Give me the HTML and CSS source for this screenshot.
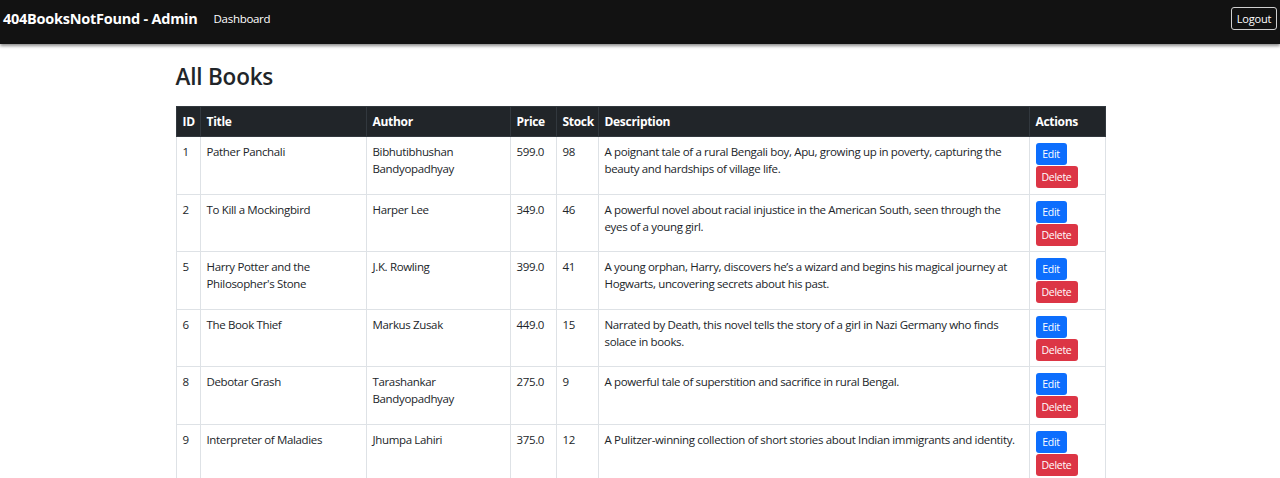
FILE: index.html
```html
<!DOCTYPE html>
<html lang="en">
<head>
<meta charset="utf-8">
<title>Admin - All Books</title>
<link rel="stylesheet" href="styles.css">
</head>
<body>
<nav class="navbar">
  <div class="nav-left">
    <span class="brand">404BooksNotFound - Admin</span>
    <a class="nav-link" href="#">Dashboard</a>
  </div>
  <button class="btn-logout">Logout</button>
</nav>
<main class="container">
  <h2 class="title">All Books</h2>
  <table class="books">
    <colgroup>
      <col class="c-id"><col class="c-title"><col class="c-author"><col class="c-price"><col class="c-stock"><col class="c-desc"><col class="c-act">
    </colgroup>
    <thead>
      <tr><th>ID</th><th>Title</th><th>Author</th><th>Price</th><th>Stock</th><th>Description</th><th>Actions</th></tr>
    </thead>
    <tbody>
      <tr><td>1</td><td>Pather Panchali</td><td>Bibhutibhushan Bandyopadhyay</td><td>599.0</td><td>98</td><td>A poignant tale of a rural Bengali boy, Apu, growing up in poverty, capturing the beauty and hardships of village life.</td><td><button class="btn edit">Edit</button><button class="btn del">Delete</button></td></tr>
      <tr><td>2</td><td>To Kill a Mockingbird</td><td>Harper Lee</td><td>349.0</td><td>46</td><td>A powerful novel about racial injustice in the American South, seen through the eyes of a young girl.</td><td><button class="btn edit">Edit</button><button class="btn del">Delete</button></td></tr>
      <tr><td>5</td><td>Harry Potter and the Philosopher's Stone</td><td>J.K. Rowling</td><td>399.0</td><td>41</td><td>A young orphan, Harry, discovers he’s a wizard and begins his magical journey at Hogwarts, uncovering secrets about his past.</td><td><button class="btn edit">Edit</button><button class="btn del">Delete</button></td></tr>
      <tr><td>6</td><td>The Book Thief</td><td>Markus Zusak</td><td>449.0</td><td>15</td><td>Narrated by Death, this novel tells the story of a girl in Nazi Germany who finds solace in books.</td><td><button class="btn edit">Edit</button><button class="btn del">Delete</button></td></tr>
      <tr><td>8</td><td>Debotar Grash</td><td>Tarashankar Bandyopadhyay</td><td>275.0</td><td>9</td><td>A powerful tale of superstition and sacrifice in rural Bengal.</td><td><button class="btn edit">Edit</button><button class="btn del">Delete</button></td></tr>
      <tr><td>9</td><td>Interpreter of Maladies</td><td>Jhumpa Lahiri</td><td>375.0</td><td>12</td><td>A Pulitzer-winning collection of short stories about Indian immigrants and identity.</td><td><button class="btn edit">Edit</button><button class="btn del">Delete</button></td></tr>
    </tbody>
  </table>
</main>
</body>
</html>
```
FILE: styles.css
```css
* { box-sizing: border-box; }
body {
  margin: 0;
  font-family: "Open Sans", "Noto Sans", Arial, sans-serif;
  color: #212529;
  background: #fff;
  font-size: 12px;
}
.navbar {
  height: 44px;
  background: #121212;
  display: flex;
  align-items: center;
  justify-content: space-between;
  padding: 0 3px 8px 3px;
  box-shadow: 0 2px 3px rgba(0,0,0,0.45);
  position: relative;
}
.nav-left { display: flex; align-items: center; gap: 16px; }
.brand { color: #fff; font-weight: 700; font-size: 14.5px; letter-spacing: -0.25px; }
.nav-link { color: #fff; text-decoration: none; font-size: 11.5px; letter-spacing: -0.3px; }
.btn-logout {
  background: transparent;
  color: #fff;
  border: 1px solid #d0d0d0;
  border-radius: 3px;
  font-family: inherit;
  font-size: 11px;
  letter-spacing: -0.2px;
  height: 23px;
  width: 46px;
  padding: 0;
}
.container { width: 929px; margin: 0 auto; padding-top: 18px; }
.title { margin: 0 0 14px; font-size: 22.5px; font-weight: 600; letter-spacing: -0.2px; line-height: 30px; }
.books { width: 929px; border-collapse: collapse; table-layout: fixed; }
.c-id { width: 24px; } .c-title { width: 166px; } .c-author { width: 144px; }
.c-price { width: 46px; } .c-stock { width: 42px; } .c-desc { width: 431px; } .c-act { width: 76px; }
.books th {
  background: #212529;
  color: #fff;
  text-align: left;
  font-weight: 700;
  height: 30px;
  padding: 0 6px;
  border: 1px solid #32383e;
  letter-spacing: -0.3px;
}
.books td {
  padding: 6px 6px 5.6px;
  vertical-align: top;
  border: 1px solid #dee2e6;
  line-height: 17px;
  letter-spacing: -0.35px;
  font-size: 11.5px;
}
.btn {
  display: block;
  border: none;
  border-radius: 3px;
  color: #fff;
  font-family: inherit;
  font-size: 10.5px;
  letter-spacing: -0.3px;
  height: 22px;
  padding: 0 6px;
}
.edit { background: #0d6efd; width: 31px; margin-bottom: 1px; }
.del { background: #dc3545; width: 42px; }
```
